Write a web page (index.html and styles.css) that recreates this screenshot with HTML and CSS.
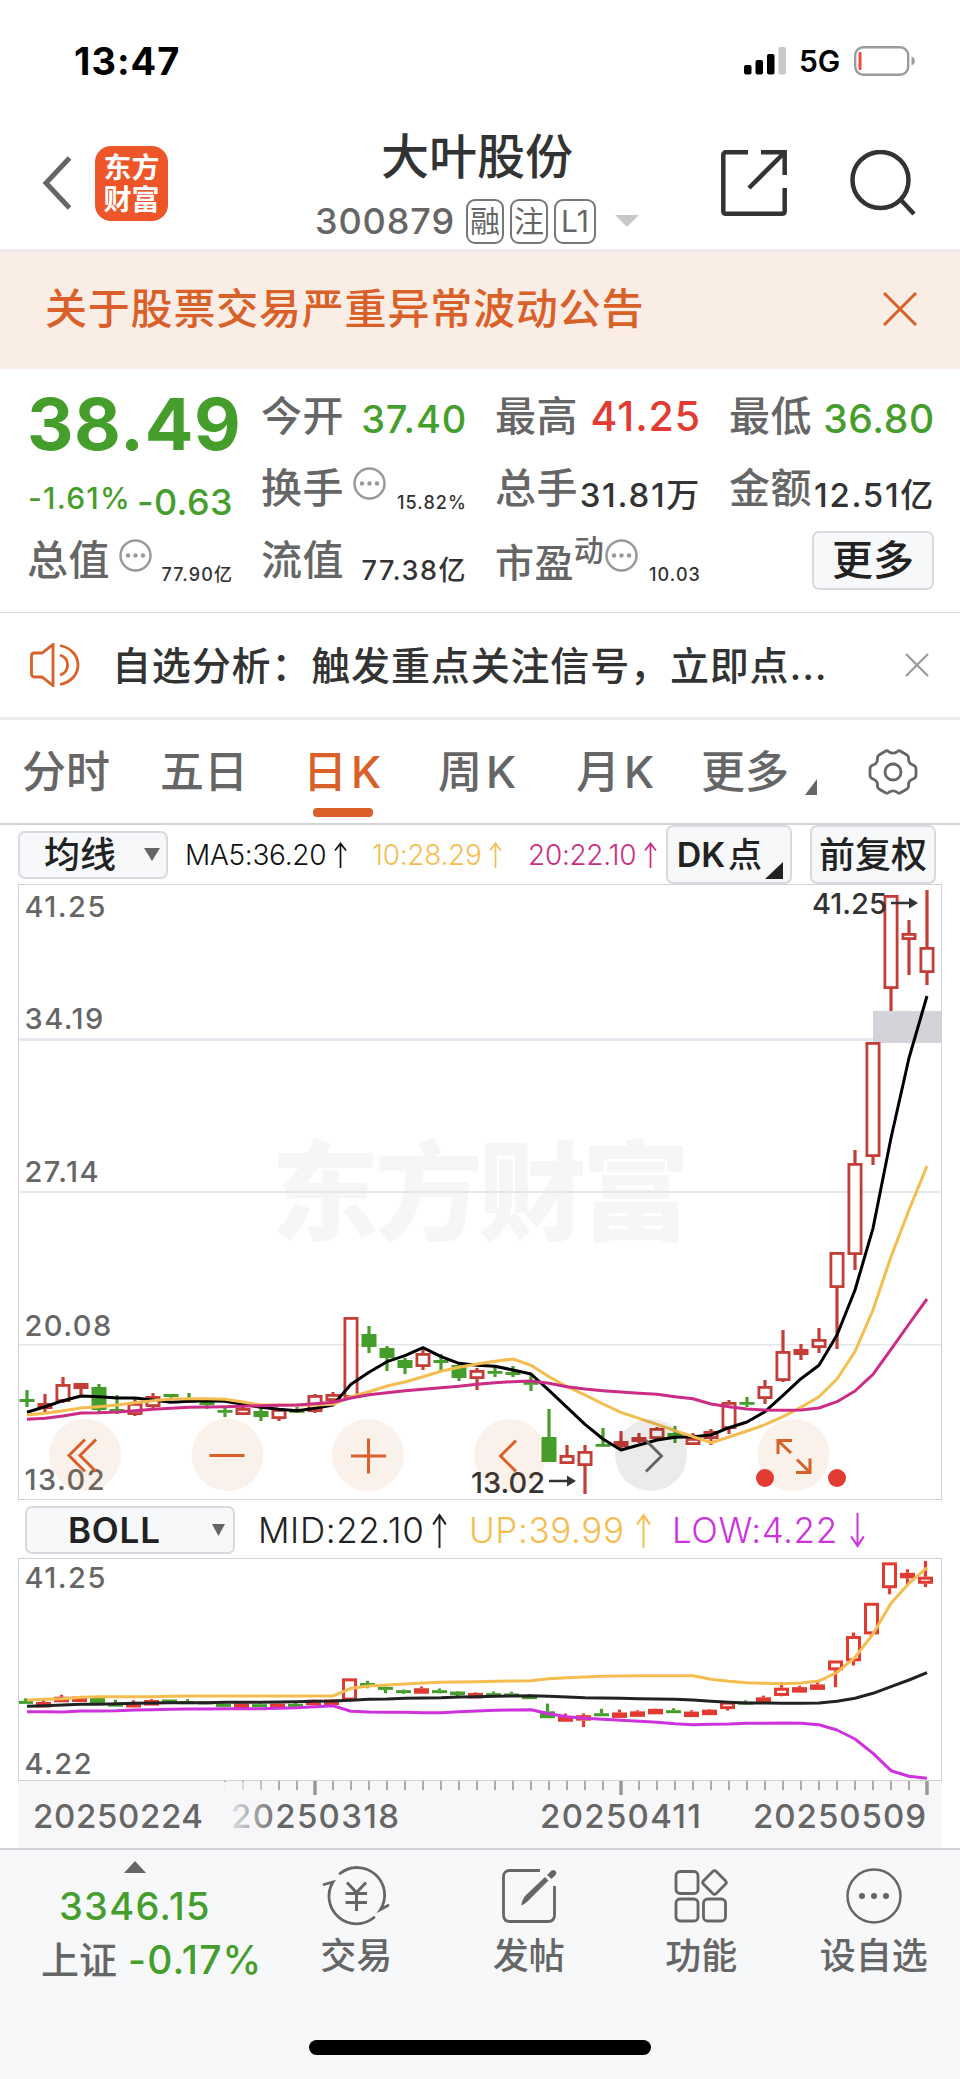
FILE: index.html
```html
<!DOCTYPE html>
<html lang="zh-CN">
<head>
    <meta charset="UTF-8">
    <meta name="viewport" content="width=device-width, initial-scale=1.0">
    <title>大叶股份 300879</title>
    <link rel="stylesheet" href="styles.css">
</head>
<body>
    <div class="status-bar">
        <span class="time">13:47</span>
        <svg class="signal" width="42" height="28" viewBox="0 0 42 28">
            <rect x="0" y="18" width="7.5" height="9.5" rx="2"/>
            <rect x="11.5" y="13" width="7.5" height="14.5" rx="2"/>
            <rect x="23" y="7" width="7.5" height="20.5" rx="2"/>
            <rect x="34.5" y="0" width="7.5" height="27.5" rx="2" fill="#c8c8c8"/>
        </svg>
        <span class="network">5G</span>
        <svg class="battery" width="62" height="30" viewBox="0 0 62 30">
            <rect x="1.2" y="1.2" width="53" height="27.6" rx="8" fill="none" stroke="#9b9b9b" stroke-width="2.4"/>
            <path d="M57.5 10.5c4.5 1 4.5 8 0 9z" fill="#9b9b9b"/>
            <rect x="4.5" y="6" width="3" height="18" rx="1" fill="#ea4d3d"/>
        </svg>
    </div>

    <div class="header">
        <svg class="back" width="30" height="54" viewBox="0 0 30 54">
            <path d="M27.5 2 4 27l23.5 25" fill="none" stroke="#666" stroke-width="5"/>
        </svg>
        <div class="logo">东方<br>财富</div>
        <div class="title-block">
            <h1>大叶股份</h1>
            <div class="code-row">
                <span class="code">300879</span>
                <span class="tag">融</span>
                <span class="tag">注</span>
                <span class="tag tag-l1">L1</span>
                <svg class="caret" width="24" height="12" viewBox="0 0 24 12"><path d="M0 0h24L12 12z" fill="#c9c9c9"/></svg>
            </div>
        </div>
        <svg class="share" width="66" height="66" viewBox="0 0 66 66" fill="none" stroke="#333" stroke-width="4.5">
            <path d="M27 2.3H5Q2.3 2.3 2.3 5V61Q2.3 63.7 5 63.7H61Q63.7 63.7 63.7 61V38"/>
            <path d="M40 2.3H63.7V25M63 3 28 38"/>
        </svg>
        <svg class="search" width="66" height="66" viewBox="0 0 66 66" fill="none" stroke="#333" stroke-width="4.5">
            <circle cx="30.5" cy="30" r="28"/>
            <path d="M50 49l14 15"/>
        </svg>
    </div>

    <div class="notice">
        <span>关于股票交易严重异常波动公告</span>
        <svg width="34" height="34" viewBox="0 0 34 34"><path d="M1 1l32 32M33 1 1 33" stroke="#d96028" stroke-width="3"/></svg>
    </div>

    <div class="quote">
        <div class="cell price green">38.49</div>
        <div class="cell"><span class="label">今开</span><span class="val v38 green">37.40</span></div>
        <div class="cell"><span class="label">最高</span><span class="val v40 red">41.25</span></div>
        <div class="cell"><span class="label">最低</span><span class="val v39 green">36.80</span></div>

        <div class="cell change green"><span class="pct">-1.61%</span><span class="diff">-0.63</span></div>
        <div class="cell"><span class="label">换手</span><svg class="more-dot" width="33" height="33"><use href="#dots"/></svg><span class="val v18">15.82%</span></div>
        <div class="cell"><span class="label">总手</span><span class="val v33">31.81万</span></div>
        <div class="cell"><span class="label">金额</span><span class="val v33">12.51亿</span></div>

        <div class="cell"><span class="label">总值</span><svg class="more-dot" width="33" height="33"><use href="#dots"/></svg><span class="val v18">77.90亿</span></div>
        <div class="cell"><span class="label">流值</span><span class="val v27">77.38亿</span></div>
        <div class="cell"><span class="label pe">市盈</span><span class="sup">动</span><svg class="more-dot tight" width="33" height="33"><use href="#dots"/></svg><span class="val v18">10.03</span></div>
        <div class="cell"><button class="btn more-btn">更多</button></div>
    </div>

    <div class="tip">
        <svg class="horn" width="50" height="44" viewBox="0 0 50 44" fill="none" stroke="#d96028" stroke-width="2.8">
            <path d="M23 1.5V42.5L12 34H4.5Q1.5 34 1.5 31V13Q1.5 10 4.5 10H12L23 1.5z"/>
            <path d="M30 12c10 3 10 17 0 20M30 2.5c24 5 24 34 0 39"/>
        </svg>
        <span class="tip-text">自选分析：触发重点关注信号，立即点...</span>
        <svg width="24" height="24" viewBox="0 0 24 24"><path d="M1 1l22 22M23 1 1 23" stroke="#999" stroke-width="2.2"/></svg>
    </div>

    <div class="tabs">
        <span class="tab t1">分时</span>
        <span class="tab t2">五日</span>
        <span class="tab t3 active">日<i>K</i></span>
        <span class="tab t4">周<i>K</i></span>
        <span class="tab t5">月<i>K</i></span>
        <span class="tab t6">更多</span>
        <svg class="corner" width="12" height="16" viewBox="0 0 12 16"><path d="M12 0v16H0z" fill="#666"/></svg>
        <svg class="gear" width="50" height="46" viewBox="0 0 50 46" fill="none" stroke="#666" stroke-width="2.8">
            <path d="M17 2.5Q19 1 21 2.8Q25 5.5 29 2.8Q31 1 33 2.5L39 6Q41 7.5 40.5 10Q40.5 14.5 45 16Q48 17 48 20V26Q48 29 45 30Q40.5 31.5 40.5 36Q41 38.5 39 40L33 43.5Q31 45 29 43.2Q25 40.5 21 43.2Q19 45 17 43.5L11 40Q9 38.5 9.5 36Q9.5 31.5 5 30Q2 29 2 26V20Q2 17 5 16Q9.5 14.5 9.5 10Q9 7.5 11 6z"/>
            <circle cx="25" cy="23" r="8"/>
        </svg>
    </div>

    <div class="ma-bar">
        <button class="btn ma-btn">均线<svg width="16" height="13" viewBox="0 0 16 13"><path d="M0 0h16L8 13z" fill="#666"/></svg></button>
        <span class="ma ma5">MA5:36.20<svg width="13" height="26"><use href="#up"/></svg></span>
        <span class="ma ma10">10:28.29<svg width="13" height="26"><use href="#up"/></svg></span>
        <span class="ma ma20">20:22.10<svg width="13" height="26"><use href="#up"/></svg></span>
        <button class="btn dk-btn"><span>DK</span>点<svg width="18" height="17" viewBox="0 0 18 17"><path d="M18 0v17H0z" fill="#222"/></svg></button>
        <button class="btn adj-btn">前复权</button>
    </div>

    <svg class="chart" id="kline" width="924" height="616" viewBox="18 884 924 616">
        <g class="watermark"><text x="271" y="1232" textLength="419">东方财富</text></g>
        <g class="grid">
            <rect x="19" y="1038" width="922" height="3"/>
            <rect x="19" y="1191" width="922" height="2"/>
            <rect x="19" y="1344" width="922" height="1.5"/>
        </g>
        <g class="axis-label">
            <text x="24.5" y="917">41.25</text>
            <text x="24.5" y="1029">34.19</text>
            <text x="24.5" y="1182">27.14</text>
            <text x="24.5" y="1336">20.08</text>
            <text x="24.5" y="1490">13.02</text>
        </g>
        <rect x="873" y="1011" width="69" height="32" fill="#d3d4da"/>
        <g id="candles"></g>
        <g id="ma-lines"></g>
        <g class="mark">
            <text x="812" y="914">41.25</text>
            <path d="M891 903h20"/><path d="M909 897.5l9 5.5-9 5.5z" class="head"/>
            <text x="471" y="1492.5">13.02</text>
            <path d="M549 1481h20"/><path d="M567 1475.5l9 5.5-9 5.5z" class="head"/>
        </g>
        <g class="controls">
            <circle cx="85" cy="1455" r="36"/>
            <circle cx="227.5" cy="1455" r="36"/>
            <circle cx="368" cy="1455" r="36"/>
            <circle cx="510" cy="1455" r="36"/>
            <circle cx="651" cy="1455" r="36" class="off"/>
            <circle cx="793.5" cy="1455" r="36"/>
            <path d="M85 1439.5 69 1455.5 85 1471.5M96 1439.5 80 1455.5 96 1471.5"/>
            <path d="M209.5 1455.5h35M351 1456h35M368.5 1438.500v35"/>
            <path d="M516 1440.5 500.5 1456 516 1471.5"/>
            <path d="M646 1440.5 661.5 1456 646 1471.5" class="off"/>
            <path d="M778 1454V1440.500H792M778.5 1441 791 1453M810 1458.500V1472.500H796M809.5 1472 797 1459.5"/>
        </g>
        <circle cx="765" cy="1478" r="9" fill="#e13b33"/>
        <circle cx="837" cy="1478" r="9" fill="#e13b33"/>
        <rect class="frame" x="18.5" y="884.5" width="923" height="615"/>
    </svg>

    <div class="boll-bar">
        <button class="btn boll-btn">BOLL<svg width="13" height="12" viewBox="0 0 13 12"><path d="M0 0h13L6.5 12z" fill="#666"/></svg></button>
        <span class="boll mid">MID:22.10<svg width="15" height="35" viewBox="0 0 13 26" preserveAspectRatio="none"><use href="#up" width="13" height="26"/></svg></span>
        <span class="boll upper">UP:39.99<svg width="15" height="35" viewBox="0 0 13 26" preserveAspectRatio="none"><use href="#up" width="13" height="26"/></svg></span>
        <span class="boll low">LOW:4.22<svg width="15" height="35" viewBox="0 0 13 26" preserveAspectRatio="none"><use href="#down" width="13" height="26"/></svg></span>
    </div>

    <svg class="chart" id="boll" width="924" height="290" viewBox="18 1558 924 290">
        <defs>
            <linearGradient id="fade">
                <stop offset="0" stop-color="#f7f7fa"/>
                <stop offset="1" stop-color="#f7f7fa" stop-opacity="0"/>
            </linearGradient>
        </defs>
        <g class="axis-label">
            <text x="24.5" y="1588">41.25</text>
            <text x="24.5" y="1773.5">4.22</text>
        </g>
        <g id="boll-candles"></g>
        <g id="boll-lines"></g>
        <rect x="18" y="1781" width="924" height="67" fill="#f7f7fa"/>
        <g id="ticks"></g>
        <g class="dates">
            <text x="33" y="1828" textLength="170">20250224</text>
            <text x="231" y="1828" textLength="168">20250318</text>
            <text x="540" y="1828" textLength="161">20250411</text>
            <text x="753" y="1828" textLength="173">20250509</text>
        </g>
        <rect x="222" y="1782" width="58" height="64" fill="url(#fade)"/>
        <rect class="frame" x="18.5" y="1558.5" width="923" height="222"/>
    </svg>

    <div class="bottom-bar">
        <div class="index">
            <svg width="22" height="12" viewBox="0 0 22 12"><path d="M11 0l11 12H0z" fill="#666"/></svg>
            <div class="index-value green">3346.15</div>
            <div class="index-name">上证<span class="green">-0.17%</span></div>
        </div>
        <div class="nav-item">
            <svg width="66" height="58" viewBox="0 0 66 58" fill="none" stroke="#666" stroke-width="2.8" stroke-linecap="round">
                <path d="M17 6.5A27.5 27.5 0 0 1 57.5 42.5L65 38.5"/>
                <path d="M51 50.5A27.5 27.5 0 0 1 10 15L1 17.5"/>
                <path d="M24 15.5l9.500 10 9.500-10M33.5 26V44M22.5 26.5H44M22.5 35.5H44" stroke-width="3" stroke-linecap="butt"/>
            </svg>
            <span>交易</span>
        </div>
        <div class="nav-item">
            <svg width="56" height="58" viewBox="0 0 56 58" fill="none" stroke="#666" stroke-width="2.8">
                <path d="M39 3.5H9Q2.500 3.5 2.5 10V48Q2.5 54.5 9 54.5H47Q53.5 54.5 53.5 48V19"/>
                <path d="M20 38.5Q21 33 24 29L44 10 47.5 13.5 27 34Q24 37 20 38.5zM46 8 50.500 3.500Q53 2 55 4.500 56 6 54.500 8L50.500 12z" fill="#666" stroke="none"/>
            </svg>
            <span>发帖</span>
        </div>
        <div class="nav-item">
            <svg width="54" height="58" viewBox="0 0 54 58" fill="none" stroke="#666" stroke-width="2.8">
                <rect x="2" y="4.5" width="22" height="22" rx="4"/>
                <rect x="2" y="32" width="22" height="22" rx="4"/>
                <rect x="29.5" y="32" width="22" height="22" rx="4"/>
                <rect x="31.5" y="6.5" width="18" height="18" rx="2.5" transform="rotate(45 40.5 15.5)"/>
            </svg>
            <span>功能</span>
        </div>
        <div class="nav-item">
            <svg width="58" height="58" viewBox="0 0 58 58">
                <circle cx="29" cy="29" r="26.5" fill="none" stroke="#666" stroke-width="2.5"/>
                <circle cx="17" cy="29" r="3" fill="#666"/><circle cx="29" cy="29" r="3" fill="#666"/><circle cx="41" cy="29" r="3" fill="#666"/>
            </svg>
            <span>设自选</span>
        </div>
        <div class="home-indicator"></div>
    </div>

    <svg class="symbols">
        <symbol id="dots" viewBox="0 0 33 33">
            <circle cx="16.5" cy="16.5" r="15" fill="none" stroke="#999" stroke-width="2.5"/>
            <circle cx="9" cy="16.5" r="2.2" fill="#999"/><circle cx="16.5" cy="16.5" r="2.2" fill="#999"/><circle cx="24" cy="16.5" r="2.2" fill="#999"/>
        </symbol>
        <symbol id="up" viewBox="0 0 13 26"><path d="M6.5 26V1.5M1 8.5 6.5 1.5 12 8.5" fill="none" stroke="currentColor" stroke-width="1.7"/></symbol>
        <symbol id="down" viewBox="0 0 13 26"><path d="M6.5 0V24.5M1 17.5 6.5 24.5 12 17.5" fill="none" stroke="currentColor" stroke-width="1.7"/></symbol>
    </svg>
    <script src="chart.js"></script>
</body>
</html>
```
FILE: styles.css
```css
* {
    box-sizing: border-box;
}

body {
    margin: 0;
    width: 960px;
    height: 2079px;
    overflow: hidden;
    background: #fff;
    color: #333;
    font-family: Inter, "Noto Sans CJK SC", sans-serif;
    font-weight: 500;
    line-height: 1;
}

svg {
    display: block;
    flex: none;
}

span, button, h1 {
    white-space: nowrap;
}

.symbols {
    width: 0;
    height: 0;
}

.green { color: #459e2b; }
.red { color: #e13b33; }

.status-bar {
    display: flex;
    align-items: center;
    height: 92px;
    padding-top: 30px;
    color: #000;
    font-weight: 700;
}

.time {
    width: 669px;
    padding-left: 74px;
    font-size: 38px;
    letter-spacing: 1px;
}

.signal { margin-left: 75px; }

.network {
    width: 54px;
    margin-left: 13px;
    font-size: 30px;
    font-weight: 600;
}

.battery { margin-left: 1px; }

/* header */
.header {
    display: flex;
    align-items: center;
    height: 160px;
    padding: 25px 0 0 42px;
    border-bottom: 3px solid #ededef;
}

.logo {
    width: 73px;
    height: 75px;
    margin-left: 23px;
    padding-top: 6px;
    border-radius: 16px;
    background: #ee562a;
    color: #fff;
    font-size: 28px;
    font-weight: 700;
    line-height: 32px;
    text-align: center;
}

.title-block {
    align-self: flex-start;
    width: 324px;
    margin: 15px 0 0 147px;
}

h1 {
    margin: 0;
    font-size: 48px;
    font-weight: 500;
    line-height: 50px;
    text-align: center;
}

.code-row {
    display: flex;
    align-items: center;
    height: 46px;
    margin-top: 16px;
}

.code {
    width: 151px;
    color: #666;
    font-size: 36px;
    letter-spacing: .9px;
}

.tag {
    display: flex;
    justify-content: center;
    width: 38px;
    height: 45px;
    margin-right: 6px;
    border: 2px solid #777;
    border-radius: 9px;
    color: #666;
    font-size: 30px;
    font-weight: 400;
    line-height: 41px;
}

.tag-l1 { width: 42px; }
.caret { margin-left: 13px; }
.share { margin-left: 82px; }
.search { margin-left: 63px; }

.notice {
    display: flex;
    align-items: center;
    justify-content: space-between;
    height: 117px;
    padding: 0 43px 3px 45px;
    background: #faede6;
    color: #d96028;
    font-size: 42px;
    letter-spacing: .8px;
}

/* quote grid */
.quote {
    display: grid;
    grid-template-columns: repeat(4, 204px);
    grid-auto-rows: 72px;
    column-gap: 30px;
    height: 244px;
    padding: 11px 0 0 29px;
    border-bottom: 1px solid #d2d3d9;
}

.cell {
    display: flex;
    align-items: center;
}

.label {
    margin-left: -2px;
    color: #666;
    font-size: 41px;
    letter-spacing: .4px;
}

.val { margin-left: auto; }

.price {
    padding-top: 15px;
    margin-left: -2px;
    font-size: 72px;
    font-weight: 700;
    letter-spacing: .6px;
}

.change {
    justify-content: space-between;
    padding-top: 20px;
    margin-left: -1px;
}

.pct { font-size: 30px; letter-spacing: 1.2px; }
.diff { font-size: 36px; padding-top: 7px; letter-spacing: .4px; }

.v38 { font-size: 38px; margin-top: 5px; letter-spacing: .8px; }
.v39 { font-size: 39px; margin-top: 5px; letter-spacing: .7px; }
.v40 { font-size: 41px; letter-spacing: .9px; }
.v33 { font-size: 33px; margin-top: 15px; letter-spacing: 1.7px; }
.v27 { font-size: 27px; margin-top: 20px; letter-spacing: 1.5px; }
.v18 { font-size: 18px; margin-top: 29px; letter-spacing: 1.1px; }

.more-dot {
    margin: 0 0 10px 9px;
}

.more-dot.tight { margin-left: 1px; }
.pe { font-size: 39px; padding-top: 4px; }
.sup { color: #666; font-size: 30px; margin-bottom: 20px; }

.btn {
    display: flex;
    align-items: center;
    padding: 0;
    border: 2px solid #d9dae0;
    border-radius: 7px;
    background: #f7f8fa;
    color: #222;
    font-family: inherit;
    font-weight: 500;
    line-height: 1;
}

.more-btn {
    justify-content: center;
    width: 122px;
    height: 59px;
    margin-left: auto;
    margin-right: 1px;
    font-size: 41px;
}

.tip {
    display: flex;
    align-items: center;
    height: 107px;
    padding-left: 30px;
    border-bottom: 3px solid #ededed;
}

.tip-text {
    width: 790px;
    padding-left: 32px;
    font-size: 39px;
    letter-spacing: .85px;
    margin-right: 35px;
}

/* period tabs */
.tabs {
    display: flex;
    align-items: center;
    height: 105px;
    border-bottom: 2px solid #d2d3d9;
    padding-left: 22px;
    color: #666;
    font-size: 44px;
}

.tab {
    position: relative;
    display: flex;
    gap: 4px;
}

.tab i { font-style: normal; }
.t1 { width: 138px; }
.t2 { width: 143px; }
.t3 { width: 135px; }
.t4 { width: 138px; }
.t5 { width: 125px; }
.t6 { width: 104px; }

.active { color: #d96028; }

.active::after {
    content: "";
    position: absolute;
    left: 10px;
    top: 58px;
    width: 60px;
    height: 9px;
    border-radius: 4px;
    background: #d96028;
}

.corner { margin-top: 30px; }
.gear { margin-left: 51px; }

.ma-bar {
    display: flex;
    align-items: center;
    height: 59px;
    padding-left: 18px;
}

.ma-btn {
    width: 150px;
    height: 48px;
    padding-left: 24px;
    font-size: 36px;
}

.ma-btn svg { margin-left: 28px; }

.ma {
    display: flex;
    align-items: center;
    justify-content: space-between;
    font-size: 28px;
    font-weight: 300;
    letter-spacing: -.3px;
}

.ma5 { width: 162px; margin-left: 17px; color: #111; }
.ma10 { width: 130px; margin-left: 25px; color: #f5bd50; }
.ma20 { width: 129px; margin-left: 26px; color: #cb2c85; }

.dk-btn {
    width: 126px;
    height: 59px;
    margin-left: 9px;
    padding-left: 6px;
    font-size: 34px;
}

.dk-btn span { width: 54px; font-weight: 600; }
.dk-btn svg { margin: 32px 0 0 3px; }

.adj-btn {
    justify-content: center;
    width: 126px;
    height: 59px;
    margin-left: 18px;
    font-size: 36px;
}

/* charts */
.chart { margin-left: 18px; }

.frame { fill: none; stroke: #d2d3d9; }
.grid rect { fill: #e4e7ee; }

.watermark text {
    fill: #f6f6f7;
    font-size: 108px;
    font-weight: 900;
}

.axis-label text {
    fill: #666;
    font-size: 29px;
    letter-spacing: 1.5px;
}

.mark text { fill: #333; font-size: 29px; }
.mark path { fill: none; stroke: #333; stroke-width: 2.5; }
.mark .head { fill: #333; stroke: none; }

.controls circle { fill: rgba(216, 95, 38, .09); }
.controls circle.off { fill: rgba(0, 0, 0, .08); }
.controls path { fill: none; stroke: #d96028; stroke-width: 3; }
.controls path.off { stroke: #666; }

.dates text { fill: #666; font-size: 33px; }

.boll-bar {
    display: flex;
    align-items: center;
    height: 58px;
    padding: 2px 0 0 25px;
}

.boll-btn {
    width: 210px;
    height: 48px;
    padding-left: 41px;
    font-size: 35px;
    font-weight: 600;
    letter-spacing: .8px;
}

.boll-btn svg { margin-left: auto; margin-right: 8px; }

.boll {
    display: flex;
    align-items: center;
    justify-content: space-between;
    font-size: 35px;
    font-weight: 300;
    letter-spacing: .6px;
}

.mid { width: 189px; margin-left: 23px; color: #222; }
.upper { width: 182px; margin-left: 22px; color: #f5bd50; }
.low { width: 193px; margin-left: 21px; color: #cd32dd; }

/* bottom bar */
.bottom-bar {
    position: relative;
    display: flex;
    height: 231px;
    border-top: 2px solid #d2d3d9;
    background: #f7f8fa;
    color: #666;
}

.index {
    width: 270px;
    padding-top: 11px;
}

.index svg { margin-left: 124px; }
.index-value { margin: 14px 0 0 59px; font-size: 38px; letter-spacing: 1.3px; }

.index-name {
    display: flex;
    align-items: center;
    gap: 11px;
    margin: 15px 0 0 41px;
    font-size: 38px;
}

.index-name span { font-size: 39px; letter-spacing: 1.1px; }

.nav-item {
    display: flex;
    flex-direction: column;
    align-items: center;
    gap: 13px;
    width: 172.5px;
    padding-top: 17px;
    font-size: 36px;
}

.nav-item svg { overflow: visible; }

.home-indicator {
    position: absolute;
    left: 309px;
    top: 190px;
    width: 342px;
    height: 15px;
    border-radius: 8px;
    background: #000;
}
```
FILE: chart.js
```js
const NS = 'http://www.w3.org/2000/svg';
const STEP = 18;

// direction, high, body top, body bottom, low
const candles = [
    ['g', 1390, 1399, 1402, 1407], ['r', 1394, 1403, 1409, 1412], ['r', 1377, 1384, 1402, 1403],
    ['r', 1383, 1383, 1389, 1397], ['g', 1384, 1387, 1410, 1412], ['g', 1395, 1409, 1411, 1414],
    ['r', 1397, 1403, 1415, 1416], ['r', 1393, 1396, 1407, 1408], ['g', 1394, 1394, 1397, 1399],
    ['g', 1393, 1400, 1402, 1403], ['g', 1400, 1401, 1405, 1409], ['g', 1407, 1410, 1412, 1417],
    ['r', 1407, 1408, 1415, 1415], ['g', 1408, 1411, 1417, 1421], ['r', 1408, 1409, 1419, 1421],
    ['g', 1407, 1410, 1412, 1413], ['r', 1394, 1395, 1412, 1413], ['r', 1392, 1394, 1401, 1402],
    ['r', 1317, 1317, 1398, 1398], ['g', 1326, 1334, 1347, 1353], ['g', 1346, 1348, 1358, 1371],
    ['g', 1358, 1360, 1368, 1374], ['r', 1347, 1353, 1367, 1370], ['g', 1354, 1360, 1363, 1372],
    ['g', 1363, 1365, 1378, 1381], ['r', 1368, 1370, 1379, 1390], ['g', 1365, 1371, 1373, 1377],
    ['g', 1366, 1372, 1375, 1377], ['g', 1375, 1382, 1384, 1391], ['g', 1409, 1437, 1462, 1462],
    ['r', 1445, 1455, 1464, 1464], ['r', 1445, 1451, 1466, 1494], ['g', 1428, 1444, 1446, 1446],
    ['r', 1431, 1441, 1447, 1448], ['r', 1433, 1437, 1442, 1443], ['r', 1427, 1428, 1439, 1439],
    ['g', 1426, 1433, 1437, 1443], ['r', 1433, 1438, 1445, 1445], ['r', 1429, 1431, 1439, 1445],
    ['r', 1400, 1402, 1429, 1434], ['g', 1397, 1402, 1404, 1407], ['r', 1380, 1386, 1399, 1404],
    ['r', 1330, 1351, 1381, 1382], ['r', 1344, 1349, 1355, 1360], ['r', 1328, 1339, 1348, 1353],
    ['r', 1252, 1252, 1288, 1349], ['r', 1150, 1163, 1255, 1270], ['r', 1042, 1042, 1157, 1165],
    ['r', 895, 895, 989, 1011], ['r', 920, 933, 940, 975], ['r', 890, 947, 973, 985]
];

// indicator values, in thirds of a pixel from the base line
const ma5 = [637, 620, 602, 588, 590, 594, 594, 600, 607, 604, 602, 604, 613, 622, 628, 632, 625, 615, 553, 517,
    485, 467, 443, 470, 490, 496, 499, 510, 522, 571, 622, 673, 717, 750, 735, 720, 712, 710, 705, 683,
    666, 635, 586, 536, 496, 405, 270, 85, -186, -426, -612];
const ma10 = [645, 640, 632, 624, 620, 615, 608, 602, 597, 596, 596, 598, 606, 615, 615, 615, 615, 613, 590, 575,
    558, 546, 530, 514, 502, 492, 484, 477, 496, 530, 560, 585, 612, 637, 655, 673, 692, 710, 728, 711,
    693, 674, 650, 622, 590, 537, 455, 330, 170, 30, -102];
const ma20 = [658, 655, 648, 639, 638, 636, 632, 628, 625, 622, 621, 620, 619, 617, 616, 615, 611, 607, 594, 584,
    578, 572, 568, 563, 559, 553, 548, 545, 543, 550, 560, 567, 572, 576, 580, 583, 590, 596, 612, 620,
    627, 630, 631, 630, 624, 605, 573, 523, 448, 372, 297];
const up = [600, 598, 596, 592, 590, 590, 590, 590, 589, 588, 588, 588, 588, 588, 588, 588, 588, 588, 565, 558,
    555, 552, 549, 547, 546, 545, 544, 543, 542, 536, 533, 531, 529, 528, 527, 527, 527, 527, 538, 544,
    548, 550, 551, 549, 543, 517, 472, 402, 310, 250, 203];
const mid = [619, 617, 615, 613, 613, 611, 610, 609, 608, 608, 608, 607, 607, 607, 606, 605, 604, 603, 601, 598,
    597, 595, 594, 593, 591, 590, 589, 588, 587, 589, 591, 593, 594, 595, 596, 597, 598, 600, 604, 607,
    609, 609, 610, 610, 609, 604, 595, 580, 560, 540, 518];
const low = [635, 635, 636, 633, 633, 632, 630, 629, 628, 627, 627, 626, 626, 626, 625, 623, 620, 617, 634, 636,
    637, 637, 638, 638, 635, 633, 631, 630, 629, 641, 650, 655, 658, 661, 664, 667, 671, 674, 673, 672,
    670, 670, 669, 670, 674, 690, 717, 760, 812, 829, 835];

function add(parent, name, attrs) {
    const el = document.createElementNS(NS, name);
    for (const key in attrs) {
        el.setAttribute(key, attrs[key]);
    }
    document.getElementById(parent).appendChild(el);
}

function drawCandles(parent, x0, red, sw, minBody, mapY) {
    candles.forEach(([dir, high, top, bottom, lowest], i) => {
        const x = x0 + i * STEP;
        const [h, t, b, l] = [high, top, bottom, lowest].map(mapY);
        const color = dir === 'r' ? red : '#459e2b';
        const height = Math.max(b - t, dir === 'r' ? minBody : sw);
        add(parent, 'path', {
            d: `M${x} ${h}V${t}M${x} ${t + height}V${Math.max(l, t + height)}`,
            stroke: color, 'stroke-width': 3.2
        });
        if (dir === 'r' && height > sw * 2 + 1) {
            add(parent, 'rect', {
                x: x - 7.5 + sw / 2, y: t + sw / 2, width: 15 - sw, height: height - sw,
                fill: '#fff', stroke: color, 'stroke-width': sw
            });
        } else {
            add(parent, 'rect', { x: x - 7.5, y: t, width: 15, height: height, fill: color });
        }
    });
}

function drawLine(parent, values, base, color) {
    const points = values.map((v, i) => `${27 + i * STEP},${(base + v / 3).toFixed(1)}`).join(' ');
    add(parent, 'polyline', {
        points: points, fill: 'none', stroke: color, 'stroke-width': 3, 'stroke-linejoin': 'round'
    });
}

drawCandles('candles', 27, '#c43d37', 2.8, 3, y => y);
drawLine('ma-lines', ma5, 1200, '#000');
drawLine('ma-lines', ma10, 1200, '#f5bd50');
drawLine('ma-lines', ma20, 1200, '#cb2c85');

drawCandles('boll-candles', 25.5, '#e13b31', 3, 5.5, y => 1561 + (y - 890) * 0.2748);
drawLine('boll-lines', up, 1500, '#f5bd50');
drawLine('boll-lines', mid, 1500, '#222');
drawLine('boll-lines', low, 1500, '#cd32dd');

for (let i = 11; i <= 50; i++) {
    const major = i === 16 || i === 33 || i === 50;
    const w = major ? 3.5 : 2;
    add('ticks', 'rect', {
        x: 27 + i * STEP - w / 2, y: 1781, width: w, height: major ? 14 : 9,
        fill: major ? '#999' : '#aaa'
    });
}
```
